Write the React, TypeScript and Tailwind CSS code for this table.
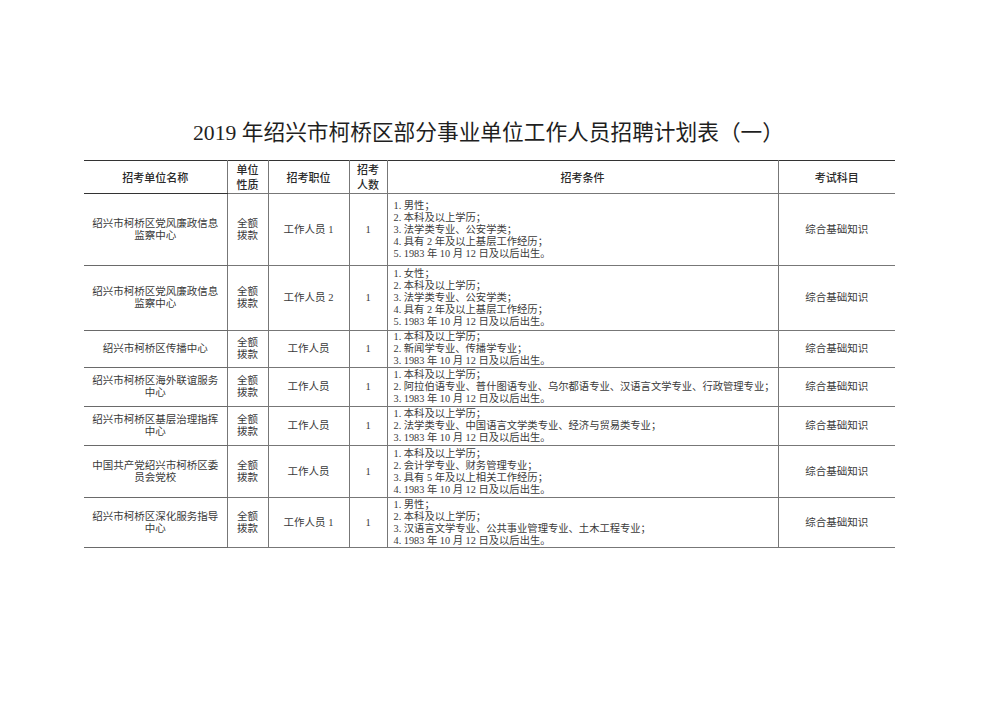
type Row = {
  unit: string
  pos: string
  cond: string[]
  h: string
}

const rows: Row[] = [
  {
    unit: '绍兴市柯桥区党风廉政信息监察中心',
    pos: '工作人员 1',
    cond: ['1. 男性；', '2. 本科及以上学历；', '3. 法学类专业、公安学类；', '4. 具有 2 年及以上基层工作经历；', '5. 1983 年 10 月 12 日及以后出生。'],
    h: 'h-[72px]',
  },
  {
    unit: '绍兴市柯桥区党风廉政信息监察中心',
    pos: '工作人员 2',
    cond: ['1. 女性；', '2. 本科及以上学历；', '3. 法学类专业、公安学类；', '4. 具有 2 年及以上基层工作经历；', '5. 1983 年 10 月 12 日及以后出生。'],
    h: 'h-[65px]',
  },
  {
    unit: '绍兴市柯桥区传播中心',
    pos: '工作人员',
    cond: ['1. 本科及以上学历；', '2. 新闻学专业、传播学专业；', '3. 1983 年 10 月 12 日及以后出生。'],
    h: 'h-[37px]',
  },
  {
    unit: '绍兴市柯桥区海外联谊服务中心',
    pos: '工作人员',
    cond: ['1. 本科及以上学历；', '2. 阿拉伯语专业、普什图语专业、乌尔都语专业、汉语言文学专业、行政管理专业；', '3. 1983 年 10 月 12 日及以后出生。'],
    h: 'h-[39px]',
  },
  {
    unit: '绍兴市柯桥区基层治理指挥中心',
    pos: '工作人员',
    cond: ['1. 本科及以上学历；', '2. 法学类专业、中国语言文学类专业、经济与贸易类专业；', '3. 1983 年 10 月 12 日及以后出生。'],
    h: 'h-[39px]',
  },
  {
    unit: '中国共产党绍兴市柯桥区委员会党校',
    pos: '工作人员',
    cond: ['1. 本科及以上学历；', '2. 会计学专业、财务管理专业；', '3. 具有 5 年及以上相关工作经历；', '4. 1983 年 10 月 12 日及以后出生。'],
    h: 'h-[52px]',
  },
  {
    unit: '绍兴市柯桥区深化服务指导中心',
    pos: '工作人员 1',
    cond: ['1. 男性；', '2. 本科及以上学历；', '3. 汉语言文学专业、公共事业管理专业、土木工程专业；', '4. 1983 年 10 月 12 日及以后出生。'],
    h: 'h-[50px]',
  },
]

const serif = "font-['Liberation_Serif','Noto_Sans_CJK_SC',serif]"
const head = "font-['Noto_Sans_CJK_SC',sans-serif] font-medium text-[11px] leading-[15px] text-[#2a2a2a] text-center align-middle border-b border-[#333] p-0"
const cell = 'border-b border-[#6a6a6a] align-middle p-0'
const vline = 'border-l border-[#777]'

export default function App() {
  return (
    <div className="w-[993px] h-[702px] bg-white pt-[120px] pl-[84px]">
      <div className="w-[811px]">
        <h1 className={`${serif} h-[26px] text-[21.7px] leading-[26px] text-center text-[#1f1f1f] pr-[2px]`}>
          2019 年绍兴市柯桥区部分事业单位工作人员招聘计划表（一）
        </h1>

        <table className="mt-[14px] w-[811px] table-fixed border-collapse border-t-[1.5px] border-[#333]">
          <colgroup>
            <col className="w-[143px]" />
            <col className="w-[41px]" />
            <col className="w-[81px]" />
            <col className="w-[38px]" />
            <col className="w-[391px]" />
            <col className="w-[117px]" />
          </colgroup>
          <thead>
            <tr className="h-[33px]">
              <th className={head}>招考单位名称</th>
              <th className={`${head} ${vline}`}>单位<br />性质</th>
              <th className={`${head} ${vline}`}>招考职位</th>
              <th className={`${head} ${vline}`}>招考<br />人数</th>
              <th className={`${head} ${vline}`}>招考条件</th>
              <th className={`${head} ${vline}`}>考试科目</th>
            </tr>
          </thead>
          <tbody className={`${serif} text-[#3a3a3a]`}>
            {rows.map((r, i) => (
              <tr key={i} className={r.h}>
                <td className={`${cell} px-[6px] text-center text-[10.5px] leading-[12px]`}>{r.unit}</td>
                <td className={`${cell} ${vline} text-center text-[10.5px] leading-[12px]`}>全额<br />拨款</td>
                <td className={`${cell} ${vline} text-center text-[10.5px] leading-[12px]`}>{r.pos}</td>
                <td className={`${cell} ${vline} text-center text-[10.5px] leading-[12px]`}>1</td>
                <td className={`${cell} ${vline} pl-[6px] text-[10.3px] leading-[12px]`}>
                  {r.cond.map((c, j) => (
                    <div key={j} className="whitespace-nowrap">{c}</div>
                  ))}
                </td>
                <td className={`${cell} ${vline} text-center text-[10.5px] leading-[12px]`}>综合基础知识</td>
              </tr>
            ))}
          </tbody>
        </table>
      </div>
    </div>
  )
}
